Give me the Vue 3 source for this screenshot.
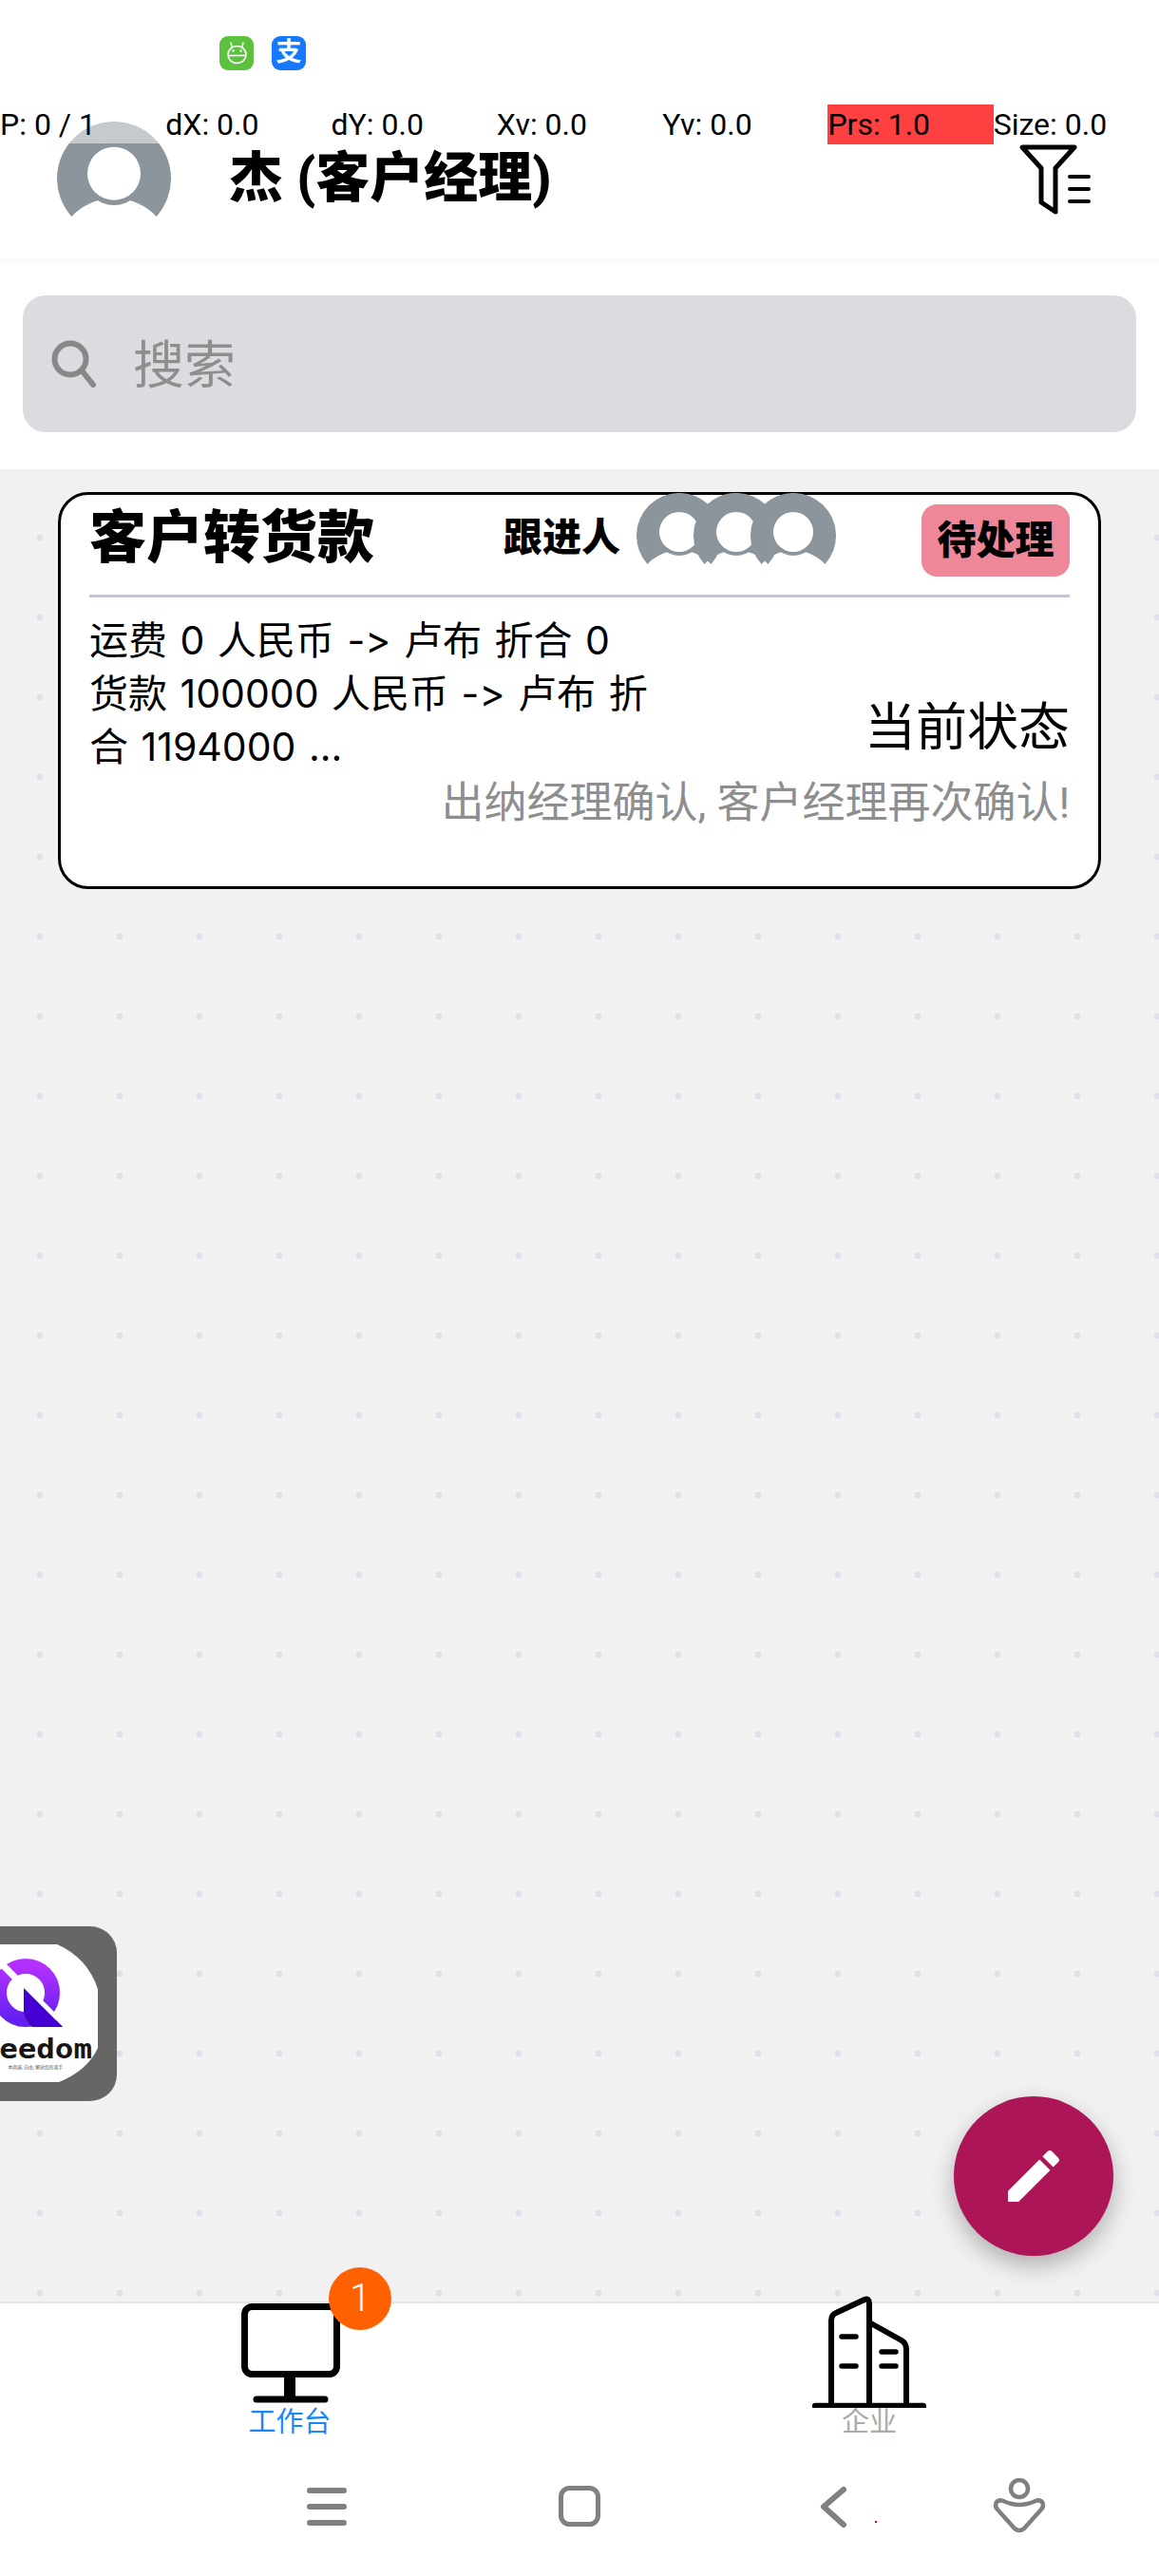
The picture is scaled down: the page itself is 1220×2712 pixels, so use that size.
<template>
  <div class="screen">
    <header class="top">
      <div class="status">
        <svg class="app-icon" viewBox="0 0 36 36">
          <rect width="36" height="36" rx="9" fill="#5cc13d" />
          <path d="M13 11 12 7M24 11l1-4" stroke="#fff" stroke-width="1.6" stroke-linecap="round" fill="none" />
          <ellipse cx="18.5" cy="19.5" rx="9.5" ry="9" stroke="#fff" stroke-width="1.6" fill="none" />
          <path d="M9.5 20.5h18" stroke="#fff" stroke-width="1.6" fill="none" />
          <circle cx="14.5" cy="15.5" r="1.2" fill="#fff" />
          <circle cx="22.5" cy="15.5" r="1.2" fill="#fff" />
        </svg>
        <div class="app-icon alipay">支</div>
      </div>
      <div class="profile">
        <svg class="me" viewBox="0 0 90 90">
          <path d="M11.5 75A45 45 0 1 1 78.5 75A46 46 0 0 0 11.5 75Z" fill="#8b959b" />
          <circle cx="45" cy="41" r="25" fill="#8b959b" />
          <circle cx="45" cy="41" r="21" fill="#fff" />
        </svg>
        <div class="name">杰 (客户经理)</div>
        <svg class="filter" viewBox="0 0 80 80" fill="none" stroke="#000" stroke-linejoin="round">
          <path d="M6 5H61L41 27V73L26 63V27Z" stroke-width="5" />
          <path d="M56 36H76M56 49H76M56 62H76" stroke-width="4" stroke-linecap="round" />
        </svg>
      </div>
      <div class="pointer-bar">
        <span v-for="item in stats" :key="item" :class="{ hot: item.startsWith('Prs') }">{{ item }}</span>
      </div>
    </header>

    <div class="search-wrap">
      <div class="search">
        <svg class="search-icon" viewBox="0 0 50 50" fill="none" stroke="#888" stroke-width="6" stroke-linecap="round">
          <circle cx="22" cy="20" r="16.5" />
          <path d="M34 32 46 47" />
        </svg>
        <span class="search-text">搜索</span>
      </div>
    </div>

    <main class="main">
      <svg class="dots" width="100%" height="100%">
        <defs>
          <pattern id="dot" width="84" height="84" patternUnits="userSpaceOnUse">
            <rect x="39" y="69" width="6" height="6" fill="#dfe0ea" />
          </pattern>
        </defs>
        <rect width="100%" height="100%" fill="url(#dot)" />
      </svg>

      <section class="card">
        <div class="card-head">
          <div class="card-title">客户转货款</div>
          <div class="follow">跟进人</div>
          <div class="followers">
            <svg v-for="n in 3" :key="n" class="follower" viewBox="0 0 90 90">
              <path d="M11.5 75A45 45 0 1 1 78.5 75A46 46 0 0 0 11.5 75Z" fill="#8b959b" />
              <circle cx="45" cy="41" r="25" fill="#8b959b" />
              <circle cx="45" cy="41" r="21" fill="#fff" />
            </svg>
          </div>
          <div class="pending">待处理</div>
        </div>
        <div class="card-body">
          <div class="desc">运费 0 人民币 -&gt; 卢布 折合 0<br />货款 100000 人民币 -&gt; 卢布 折合 1194000 ...</div>
          <div class="state-label">当前状态</div>
        </div>
        <div class="state-text">出纳经理确认, 客户经理再次确认!</div>
      </section>

      <div class="float-app">
        <svg viewBox="0 0 123 184" width="123" height="184">
          <defs>
            <linearGradient id="ring" x1="0" y1="0" x2="0" y2="1">
              <stop offset="0" stop-color="#b430ff" />
              <stop offset="1" stop-color="#6420f0" />
            </linearGradient>
          </defs>
          <path d="M0 19H60Q92 33 103 66V128Q92 152 62 164H0Z" fill="#fff" />
          <circle cx="27" cy="70" r="28" fill="none" stroke="url(#ring)" stroke-width="16" />
          <path d="M25 90Q28 102 34 106H66L25 65Z" fill="#3d10a8" />
          <path d="M-4 34 60 98" stroke="#fff" stroke-width="7" />
          <path d="M25 65 66 106H36Q30 100 25 90Z" fill="#4400d2" />
          <text class="logo-word" x="-40" y="139" textLength="137" lengthAdjust="spacingAndGlyphs">Freedom</text>
          <text class="logo-sub" x="66" y="150" text-anchor="end">本商城, 自由, 解放您的双手</text>
        </svg>
      </div>

      <button class="fab" type="button">
        <svg viewBox="0 0 24 24" width="72" height="72" fill="#fff">
          <path d="M3 17.25V21h3.75L17.81 9.94l-3.75-3.75L3 17.25zM20.71 7.04c.39-.39.39-1.02 0-1.41l-2.34-2.34c-.39-.39-1.02-.39-1.41 0l-1.83 1.83 3.75 3.75 1.83-1.83z" />
        </svg>
      </button>
    </main>

    <footer class="bottom">
      <div class="tabs">
        <div class="tab active">
          <div class="tab-icon">
            <svg viewBox="0 0 120 120" width="120" height="120" fill="none" stroke="#000" stroke-linecap="round">
              <rect x="12.5" y="13.5" width="97" height="71" rx="8" stroke-width="7" />
              <path d="M60 86V111" stroke-width="12" stroke-linecap="butt" />
              <path d="M25 111H97" stroke-width="7" />
            </svg>
            <span class="count">1</span>
          </div>
          <span class="tab-label">工作台</span>
        </div>
        <div class="tab">
          <div class="tab-icon">
            <svg viewBox="0 0 120 120" width="120" height="120" fill="none" stroke="#000" stroke-linecap="round" stroke-linejoin="round">
              <path d="M3 118H117" stroke-width="6.5" />
              <path d="M20 118V28Q20 22 25 20L55 6Q60 4 60 10V118" stroke-width="6" />
              <path d="M60 30 94 49Q99 52 99 58V118" stroke-width="6" />
              <path d="M31 45H46M31 76H46M73 61H88M73 76H88" stroke-width="5.5" />
            </svg>
          </div>
          <span class="tab-label">企业</span>
        </div>
      </div>
      <div class="nav">
        <svg viewBox="0 0 60 60" fill="none" stroke="#808080" stroke-width="6" stroke-linecap="round">
          <path d="M12 13H48M12 30H48M12 47H48" />
        </svg>
        <svg viewBox="0 0 60 60" fill="none" stroke="#808080" stroke-width="5">
          <rect x="10.5" y="10.5" width="39" height="38" rx="9" />
        </svg>
        <svg class="nav-back" viewBox="0 0 60 60" fill="none" stroke="#808080" stroke-width="6" stroke-linecap="round" stroke-linejoin="round">
          <path d="M42 12 21 30 42 49" />
          <rect x="75" y="45" width="2" height="2" fill="#f00" stroke="none" />
        </svg>
        <svg class="nav-last" viewBox="0 0 60 60" fill="none" stroke="#808080" stroke-width="4.5" stroke-linejoin="round">
          <circle cx="30" cy="11" r="9" />
          <path d="M13 24Q22 28 30 28Q38 28 47 24Q52 22 54.5 26Q56 30 53 33L35 53Q30 57 25 53L7 33Q4 30 5.5 26Q8 22 13 24Z" />
        </svg>
      </div>
    </footer>
  </div>
</template>

<script setup>
const stats = ['P: 0 / 1', 'dX: 0.0', 'dY: 0.0', 'Xv: 0.0', 'Yv: 0.0', 'Prs: 1.0', 'Size: 0.0']
</script>

<style>
html,
body {
  background: #fff;
}
</style>

<style scoped>
.screen {
  width: 1220px;
  height: 2712px;
  display: flex;
  flex-direction: column;
  overflow: hidden;
  font-family: Roboto, "Noto Sans CJK SC", sans-serif;
  color: #000;
  background: #fff;
}

.top {
  position: relative;
  height: 277px;
  flex: none;
  border-bottom: 5px solid #fafafa;
  box-sizing: border-box;
}

.status {
  height: 110px;
  box-sizing: border-box;
  padding: 38px 0 0 231px;
  display: flex;
  gap: 19px;
}

.app-icon {
  width: 36px;
  height: 36px;
}

.alipay {
  border-radius: 9px;
  background: #1677ff;
  color: #fff;
  font-size: 27px;
  font-weight: 700;
  line-height: 35px;
  text-align: center;
}

.profile {
  display: flex;
  align-items: flex-start;
  padding: 18px 70px 0 60px;
}

.me {
  width: 120px;
  height: 120px;
  flex: none;
}

.name {
  margin: 22px 0 0 61px;
  font-size: 57px;
  font-weight: 900;
  line-height: 76px;
}

.filter {
  width: 80px;
  height: 80px;
  margin: 22px 0 0 auto;
}

.pointer-bar {
  position: absolute;
  left: 0;
  top: 110px;
  width: 100%;
  height: 41px;
  display: grid;
  grid-template-columns: repeat(7, 1fr);
  background: rgba(255, 255, 255, 0.5);
  font-size: 32px;
  line-height: 42px;
}

.pointer-bar span {
  white-space: nowrap;
}

.pointer-bar .hot {
  background: #ff4040;
}

.search-wrap {
  flex: none;
  padding: 34px 24px 39px;
}

.search {
  height: 144px;
  box-sizing: border-box;
  padding-left: 28px;
  display: flex;
  align-items: center;
  gap: 38px;
  border-radius: 24px;
  background: #dcdce0;
  color: #8e8e8e;
  font-size: 54px;
}

.search-text {
  margin-top: -6px;
}

.search-icon {
  width: 50px;
  height: 50px;
}

.main {
  position: relative;
  flex: 1;
  background: #f1f1f2;
  padding: 24px 61px 0;
}

.dots {
  position: absolute;
  left: 0;
  top: 0;
}

.card {
  position: relative;
  height: 418px;
  box-sizing: border-box;
  padding: 0 30px;
  border: 3px solid #000;
  border-radius: 32px;
  background: #fff;
}

.card-head {
  height: 108px;
  box-sizing: border-box;
  padding-bottom: 10px;
  display: flex;
  align-items: center;
  border-bottom: 3px solid #c8c2d0;
}

.card-title {
  width: 436px;
  font-size: 60px;
  font-weight: 900;
  line-height: 70px;
  margin-top: -4px;
}

.follow {
  width: 140px;
  font-size: 41px;
  font-weight: 900;
  margin-top: -14px;
}

.followers {
  display: flex;
  margin-top: -10px;
}

.follower {
  width: 90px;
  height: 90px;
}

.follower + .follower {
  margin-left: -30px;
}

.pending {
  width: 156px;
  height: 76px;
  margin-left: auto;
  border-radius: 16px;
  background: #ee8899;
  font-size: 41px;
  font-weight: 900;
  line-height: 76px;
  text-align: center;
}

.card-body {
  display: flex;
  justify-content: space-between;
  margin-top: 17px;
}

.desc {
  width: 620px;
  font-family: Inter, "Noto Sans CJK SC", sans-serif;
  font-size: 41px;
  font-variant-ligatures: none;
  font-feature-settings: "calt" 0;
  line-height: 56px;
  word-spacing: 2px;
}

.state-label {
  align-self: flex-end;
  margin-bottom: 14px;
  font-size: 54px;
  line-height: 66px;
}

.state-text {
  margin-top: 4px;
  color: #8e8e8e;
  font-size: 45px;
  line-height: 56px;
  text-align: right;
}

.float-app {
  position: absolute;
  left: 0;
  top: 1534px;
  width: 123px;
  height: 184px;
  overflow: hidden;
  border-radius: 0 28px 28px 0;
  background: #666;
}

.float-app svg {
  display: block;
}

.logo-word {
  font-family: "DejaVu Sans Mono", monospace;
  font-size: 29px;
  font-weight: 700;
  fill: #161616;
}

.logo-sub {
  font-family: "Noto Sans CJK SC", sans-serif;
  font-size: 4.8px;
  fill: #555;
}

.fab {
  position: absolute;
  right: 48px;
  bottom: 48px;
  width: 168px;
  height: 168px;
  padding: 0;
  border: 0;
  border-radius: 50%;
  display: flex;
  align-items: center;
  justify-content: center;
  background: #ac1557;
  box-shadow: 0 10px 24px rgba(0, 0, 0, 0.28);
}

.bottom {
  position: relative;
  height: 289px;
  flex: none;
  background: #fff;
}

.tabs {
  display: grid;
  grid-template-columns: 1fr 1fr;
  height: 142px;
  box-sizing: border-box;
  border-top: 2px solid #e5e5e5;
}

.tab {
  display: flex;
  flex-direction: column;
  align-items: center;
  margin-top: -10px;
}

.tab-icon {
  position: relative;
  width: 120px;
  height: 120px;
}

.tab-icon svg {
  display: block;
}

.count {
  position: absolute;
  left: 101px;
  top: -28px;
  width: 66px;
  height: 66px;
  border-radius: 50%;
  background: #ff6000;
  color: #fff;
  font-size: 40px;
  font-weight: 300;
  line-height: 66px;
  text-align: center;
}

.tab-label {
  color: #aaa;
  font-size: 29px;
  line-height: 30px;
}

.active .tab-label {
  color: #1688f7;
}

.nav {
  height: 147px;
  padding-left: 314px;
  display: flex;
  align-items: center;
  gap: 206px;
}

.nav svg {
  width: 60px;
  height: 60px;
  flex: none;
}

.nav-back {
  overflow: visible;
}

.nav svg.nav-last {
  margin-left: -69px;
}
</style>
